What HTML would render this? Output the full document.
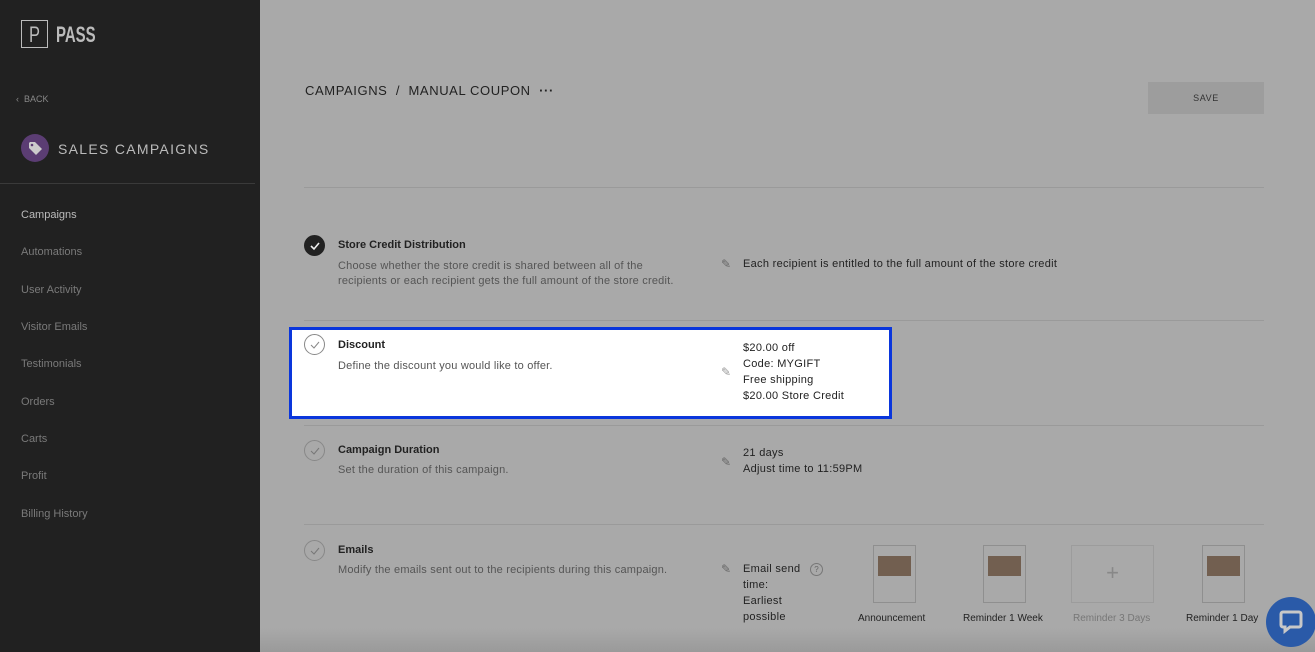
<!DOCTYPE html>
<html><head><meta charset="utf-8"><style>
*{margin:0;padding:0;box-sizing:border-box}
body{width:1315px;height:652px;overflow:hidden;background:#a9a9a9;font-family:"Liberation Sans",sans-serif;position:relative}
.a{position:absolute;white-space:nowrap}
#sb{position:absolute;left:0;top:0;width:260px;height:652px;background:#212121}
.nav{position:absolute;left:21px;font-size:11px;color:#7a7a7a}
.t{font-size:11px;font-weight:bold;color:#222}
.d{font-size:11px;color:#555;line-height:15px;letter-spacing:.2px}
.r{font-size:11px;color:#222;line-height:16px;letter-spacing:.3px}
.hr{position:absolute;left:304px;width:960px;height:1px;background:#9a9a9a}
.ck{position:absolute;left:304px;width:21px;height:21px;border-radius:50%;border:1px solid #888}
.thumb{position:absolute;top:545px;width:43px;height:58px;border:1px solid #8f8f8f}
.thumb i{position:absolute;left:4px;top:10px;width:33px;height:20px;background:#725f50}
.lab{position:absolute;top:613px;font-size:10px;color:#222;white-space:nowrap}
</style></head><body>
<div id="sb">
<div class="a" style="left:21px;top:20px;width:27px;height:28px;border:1px solid #bbb"></div>
<div class="a" style="left:29px;top:22px;font-size:22px;color:#bbb;transform:scaleX(.75);transform-origin:left">P</div>
<div class="a" style="left:56px;top:22px;font-size:22px;font-weight:bold;color:#bbb;transform:scaleX(.68);transform-origin:left">PASS</div>
<div class="a" style="left:16px;top:94px;font-size:9px;color:#888">‹ &nbsp;BACK</div>
<div class="a" style="left:21px;top:134px;width:28px;height:28px;border-radius:50%;background:#5b3d73"></div>
<svg class="a" style="left:27px;top:140px" width="16" height="16" viewBox="0 0 16 16"><path d="M2 3v5l7 7 6-6-7-7H3z" fill="#ccc"/><circle cx="5" cy="5" r="1.3" fill="#5b3d73"/></svg>
<div class="a" style="left:58px;top:141px;font-size:14px;color:#bbb;letter-spacing:1.3px">SALES CAMPAIGNS</div>
<div class="a" style="left:0;top:183px;width:255px;height:1px;background:#3a3a3a"></div>
<div class="nav" style="top:209px;color:#bbb">Campaigns</div>
<div class="nav" style="top:246px">Automations</div>
<div class="nav" style="top:284px">User Activity</div>
<div class="nav" style="top:321px">Visitor Emails</div>
<div class="nav" style="top:358px">Testimonials</div>
<div class="nav" style="top:396px">Orders</div>
<div class="nav" style="top:433px">Carts</div>
<div class="nav" style="top:470px">Profit</div>
<div class="nav" style="top:508px">Billing History</div>
</div>

<div class="a" style="left:305px;top:83px;font-size:13px;color:#222;letter-spacing:.6px">CAMPAIGNS &nbsp;/ &nbsp;MANUAL COUPON &nbsp;<b>···</b></div>
<div class="a" style="left:1148px;top:82px;width:116px;height:32px;background:#9d9d9d;font-size:9px;color:#333;text-align:center;line-height:32px;letter-spacing:.6px">SAVE</div>
<div class="hr" style="top:187px"></div>

<div class="ck" style="top:235px;background:#222;border-color:#222"></div>
<svg class="a" style="left:309px;top:240px" width="12" height="12"><path d="M2 6l3 3 5-6" stroke="#eee" stroke-width="1.6" fill="none"/></svg>
<div class="a t" style="left:338px;top:239px">Store Credit Distribution</div>
<div class="a d" style="left:338px;top:259px">Choose whether the store credit is shared between all of the<br>recipients or each recipient gets the full amount of the store credit.</div>
<div class="a" style="left:721px;top:257px;font-size:12px;color:#666">✎</div>
<div class="a r" style="left:743px;top:256px">Each recipient is entitled to the full amount of the store credit</div>
<div class="hr" style="top:320px"></div>

<div class="a" style="left:289px;top:327px;width:603px;height:92px;background:#fff;border:3px solid #0a36dc"></div>
<div class="ck" style="top:334px"></div>
<svg class="a" style="left:309px;top:339px" width="12" height="12"><path d="M2 6l3 3 5-6" stroke="#888" stroke-width="1" fill="none"/></svg>
<div class="a t" style="left:338px;top:339px">Discount</div>
<div class="a d" style="left:338px;top:359px">Define the discount you would like to offer.</div>
<div class="a" style="left:721px;top:365px;font-size:12px;color:#999">✎</div>
<div class="a r" style="left:743px;top:340px">$20.00 off<br>Code: MYGIFT<br>Free shipping<br>$20.00 Store Credit</div>
<div class="hr" style="top:425px"></div>

<div class="ck" style="top:440px"></div>
<svg class="a" style="left:309px;top:445px" width="12" height="12"><path d="M2 6l3 3 5-6" stroke="#777" stroke-width="1" fill="none"/></svg>
<div class="a t" style="left:338px;top:444px">Campaign Duration</div>
<div class="a d" style="left:338px;top:463px">Set the duration of this campaign.</div>
<div class="a" style="left:721px;top:455px;font-size:12px;color:#666">✎</div>
<div class="a r" style="left:743px;top:445px">21 days<br>Adjust time to 11:59PM</div>
<div class="hr" style="top:524px"></div>

<div class="ck" style="top:540px"></div>
<svg class="a" style="left:309px;top:545px" width="12" height="12"><path d="M2 6l3 3 5-6" stroke="#777" stroke-width="1" fill="none"/></svg>
<div class="a t" style="left:338px;top:544px">Emails</div>
<div class="a d" style="left:338px;top:563px">Modify the emails sent out to the recipients during this campaign.</div>
<div class="a" style="left:721px;top:562px;font-size:12px;color:#666">✎</div>
<div class="a r" style="left:743px;top:561px">Email send<br>time:<br>Earliest<br>possible</div>
<div class="a" style="left:810px;top:563px;width:13px;height:13px;border:1px solid #777;border-radius:50%;font-size:8px;color:#666;text-align:center;line-height:11px">?</div>

<div class="thumb" style="left:873px"><i></i></div>
<div class="lab" style="left:858px">Announcement</div>
<div class="thumb" style="left:983px"><i></i></div>
<div class="lab" style="left:963px">Reminder 1 Week</div>
<div class="thumb" style="left:1071px;width:83px;border-color:#9c9c9c;font-size:22px;color:#888;text-align:center;line-height:54px;font-weight:100">+</div>
<div class="lab" style="left:1073px;color:#777">Reminder 3 Days</div>
<div class="thumb" style="left:1202px"><i></i></div>
<div class="lab" style="left:1186px">Reminder 1 Day</div>

<div class="a" style="left:260px;top:628px;width:1055px;height:24px;background:linear-gradient(#a9a9a900,#9a9a9a)"></div>
<div class="a" style="left:1266px;top:597px;width:50px;height:50px;border-radius:50%;background:#2a5aa8"></div>
<svg class="a" style="left:1278px;top:609px" width="26" height="26" viewBox="0 0 26 26"><path d="M5 3h16a2 2 0 0 1 2 2v11a2 2 0 0 1-2 2H12l-5 4v-4H5a2 2 0 0 1-2-2V5a2 2 0 0 1 2-2z" fill="none" stroke="#c8c8c8" stroke-width="3"/></svg>
</body></html>
